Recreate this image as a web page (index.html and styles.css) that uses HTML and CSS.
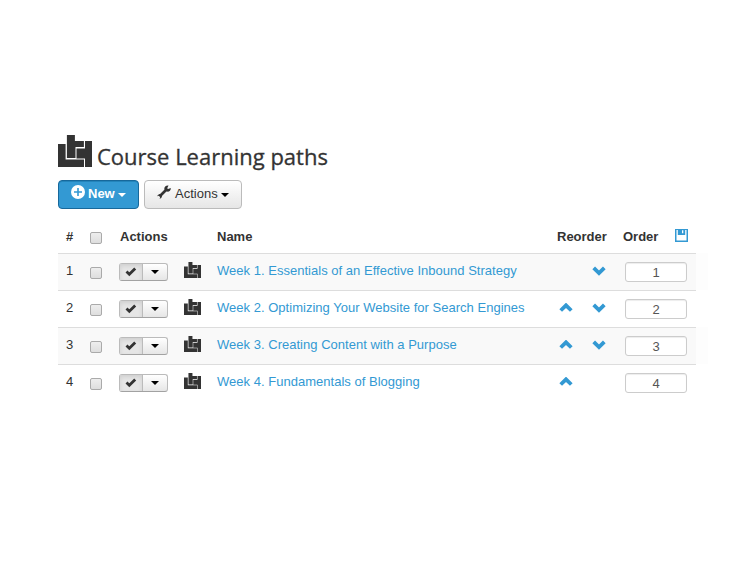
FILE: index.html
```html
<!DOCTYPE html>
<html lang="en">
<head>
    <meta charset="UTF-8">
    <title>Course Learning paths</title>
    <link rel="stylesheet" href="styles.css">
</head>
<body>
    <!-- Shared icons -->
    <svg class="sprite" width="0" height="0">
        <symbol id="logo" viewBox="0 0 34 32">
            <path d="M0 9h7.600v15.500h18.400V32H0z"/>
            <path d="M8.900 0h8v6h9v6H17.500v4.500V23H8.900z"/>
            <path d="M27 6h7v26h-7v-8.500h-8.500v-10H27z"/>
        </symbol>
        <symbol id="check" viewBox="0 0 12 10">
            <path d="M1.500 4.500l2.800 2.700L10.200 1.500" fill="none" stroke="#333" stroke-width="2.800"/>
        </symbol>
        <symbol id="up" viewBox="0 0 14 10">
            <path d="M1.700 7.500L7 2.300l5.300 5.200" fill="none" stroke="#3399d3" stroke-width="3.800"/>
        </symbol>
        <symbol id="down" viewBox="0 0 14 10">
            <path d="M1.700 1.800L7 7l5.300-5.200" fill="none" stroke="#3399d3" stroke-width="3.800"/>
        </symbol>
    </svg>

    <div class="container">
        <h1 class="page-title">
            <svg class="title-logo"><use href="#logo"/></svg>
            <span>Course Learning paths</span>
        </h1>

        <div class="toolbar">
            <button class="btn btn-new">
                <svg width="14" height="14" viewBox="0 0 14 14"><circle cx="7" cy="7" r="7" fill="#fff"/><path d="M7 3v8M3 7h8" stroke="#3399d3" stroke-width="1.600"/></svg>
                <span>New</span>
                <i class="caret"></i>
            </button>
            <button class="btn btn-actions">
                <svg width="14" height="14" viewBox="0 0 14 14"><path d="M2.500 11.500L10 4" stroke="#333" stroke-width="2.600"/><path d="M11.500 0.500L10.200 3.200l.8.800 2.800-1.100c.2 2.800-2 4.400-4.200 3.700L7.300 4.300C7 2 9 .2 11.500.5z" fill="#333"/><path d="M0.300 11.200c.5-2 2.500-3 4.300-1.800 1 1.900 0 3.900-2 4.400l.8-2.300-.9-.9z" fill="#333"/></svg>
                <span>Actions</span>
                <i class="caret"></i>
            </button>
        </div>

        <table class="paths">
            <colgroup>
                <col class="col-num"><col class="col-check"><col class="col-actions"><col class="col-icon">
                <col class="col-name"><col class="col-reorder"><col class="col-order">
            </colgroup>
            <thead>
                <tr>
                    <th>#</th>
                    <th><span class="box"></span></th>
                    <th>Actions</th>
                    <th></th>
                    <th>Name</th>
                    <th>Reorder</th>
                    <th>
                        <div class="order-head">
                            <span>Order</span>
                            <svg width="13" height="13" viewBox="0 0 13 13"><path d="M0 0h13v13H0z" fill="#3399d3"/><path d="M1.500 1h1.300v5h7.400V1h1.300v10.500h-10z" fill="#fff"/><path d="M7 1.200h1.300v3H7z" fill="#fff"/></svg>
                        </div>
                    </th>
                </tr>
            </thead>
            <tbody>
                <tr>
                    <td>1</td>
                    <td><span class="box"></span></td>
                    <td><div class="btn-group"><span class="state"><svg><use href="#check"/></svg></span><span class="drop"><i class="caret"></i></span></div></td>
                    <td><svg class="row-logo"><use href="#logo"/></svg></td>
                    <td><a>Week 1. Essentials of an Effective Inbound Strategy</a></td>
                    <td><div class="reorder"><svg></svg><svg><use href="#down"/></svg></div></td>
                    <td><input class="order" type="text" value="1"></td>
                </tr>
                <tr>
                    <td>2</td>
                    <td><span class="box"></span></td>
                    <td><div class="btn-group"><span class="state"><svg><use href="#check"/></svg></span><span class="drop"><i class="caret"></i></span></div></td>
                    <td><svg class="row-logo"><use href="#logo"/></svg></td>
                    <td><a>Week 2. Optimizing Your Website for Search Engines</a></td>
                    <td><div class="reorder"><svg><use href="#up"/></svg><svg><use href="#down"/></svg></div></td>
                    <td><input class="order" type="text" value="2"></td>
                </tr>
                <tr>
                    <td>3</td>
                    <td><span class="box"></span></td>
                    <td><div class="btn-group"><span class="state"><svg><use href="#check"/></svg></span><span class="drop"><i class="caret"></i></span></div></td>
                    <td><svg class="row-logo"><use href="#logo"/></svg></td>
                    <td><a>Week 3. Creating Content with a Purpose</a></td>
                    <td><div class="reorder"><svg><use href="#up"/></svg><svg><use href="#down"/></svg></div></td>
                    <td><input class="order" type="text" value="3"></td>
                </tr>
                <tr>
                    <td>4</td>
                    <td><span class="box"></span></td>
                    <td><div class="btn-group"><span class="state"><svg><use href="#check"/></svg></span><span class="drop"><i class="caret"></i></span></div></td>
                    <td><svg class="row-logo"><use href="#logo"/></svg></td>
                    <td><a>Week 4. Fundamentals of Blogging</a></td>
                    <td><div class="reorder"><svg><use href="#up"/></svg><svg></svg></div></td>
                    <td><input class="order" type="text" value="4"></td>
                </tr>
            </tbody>
        </table>
    </div>
</body>
</html>
```

FILE: styles.css
```css
* {
    box-sizing: border-box;
}

body {
    margin: 0;
    background-color: #fff;
    color: #333;
    font-family: "Liberation Sans", Arial, sans-serif;
    font-size: 13px;
    line-height: 18px;
}

svg {
    display: block;
    flex: none;
}

.sprite {
    height: 0;
}

.container {
    width: 638px;
    margin-left: 58px;
    padding-top: 135px;
}

.page-title {
    display: flex;
    gap: 5px;
    height: 45px;
    margin: 0;
    font: 400 22px/30px "Open Sans", sans-serif;
    -webkit-text-stroke: 0.3px #333;
}

.page-title span {
    padding-top: 6px;
}

.title-logo {
    width: 34px;
    height: 32px;
    fill: #333;
}

.toolbar {
    display: flex;
    gap: 5px;
    margin-bottom: 10px;
}

.btn {
    display: flex;
    align-items: flex-start;
    height: 29px;
    padding: 4px 12px;
    border: 1px solid #bbb;
    border-radius: 4px;
    font: 13px/17px "Liberation Sans", Arial, sans-serif;
    color: #333;
}

.btn svg {
    margin-right: 4px;
}

.btn-new svg {
    margin-right: 3px;
}

.btn .caret {
    margin: 8px 0 0 3px;
}

.btn-new {
    width: 81px;
    background-color: #3399d3;
    border-color: #17689b;
    box-shadow: inset 0 1px 0 #2384bb;
    color: #fff;
    font-weight: bold;
}

.btn-actions {
    width: 98px;
    background: linear-gradient(#fff, #e6e6e6);
}

.caret {
    width: 0;
    height: 0;
    border: 4px solid transparent;
    border-top-color: #000;
    border-bottom: 0;
}

.btn-new .caret {
    border-top-color: #fff;
}

.paths {
    width: 638px;
    table-layout: fixed;
    border-collapse: separate;
    border-spacing: 0;
}

.col-num { width: 24px; }
.col-check { width: 30px; }
.col-actions { width: 72px; }
.col-icon { width: 25px; }
.col-name { width: 340px; }
.col-reorder { width: 66px; }
.col-order { width: 81px; }

.paths th,
.paths td {
    height: 37px;
    padding: 8px 0 0 8px;
    border-top: 1px solid #ddd;
    text-align: left;
    vertical-align: top;
}

.paths th {
    height: 34px;
    padding-top: 9px;
    border-top: 0;
}

.paths tbody tr:nth-child(odd) {
    background-color: #f9f9f9;
    box-shadow: 12px 0 0 #fdfdfd;
}

.paths td:nth-child(3) .btn-group {
    margin-left: -1px;
}

.paths td:nth-child(4) {
    padding-left: 0;
}

.paths a {
    color: #3399d3;
    letter-spacing: 0.02px;
}

.box {
    display: block;
    width: 12px;
    height: 12px;
    margin-top: 5px;
    border: 1px solid #aaa;
    border-radius: 2px;
    background: linear-gradient(#eee, #dedede);
}

.paths th .box {
    margin-top: 4px;
}

.btn-group {
    display: flex;
    width: 49px;
    height: 18px;
    margin-top: 1px;
    border: 1px solid #bbb;
    border-bottom-color: #a2a2a2;
    border-radius: 3px;
    background: linear-gradient(#fff, #e6e6e6);
}

.btn-group span {
    display: flex;
    align-items: center;
    justify-content: center;
}

.state {
    width: 23px;
    border-right: 1px solid #bbb;
    background-color: #e6e6e6;
    box-shadow: inset 0 2px 4px rgba(0, 0, 0, 0.1);
}

.state svg {
    width: 12px;
    height: 10px;
}

.drop {
    flex: 1;
}

.row-logo {
    width: 17px;
    height: 16px;
    fill: #333;
}

.reorder {
    display: flex;
    gap: 19px;
    padding: 4px 0 0 2px;
}

.reorder svg {
    width: 14px;
    height: 10px;
}

.order-head {
    display: flex;
    justify-content: space-between;
    width: 65px;
}

.order-head svg {
    margin-top: 1px;
}

.order {
    display: block;
    width: 62px;
    height: 20px;
    margin-left: 2px;
    padding: 0;
    border: 1px solid #ccc;
    border-radius: 3px;
    background-color: #fff;
    box-shadow: inset 0 1px 1px rgba(0, 0, 0, 0.075);
    color: #555;
    font: 13px "Liberation Sans", Arial, sans-serif;
    text-align: center;
}
```
